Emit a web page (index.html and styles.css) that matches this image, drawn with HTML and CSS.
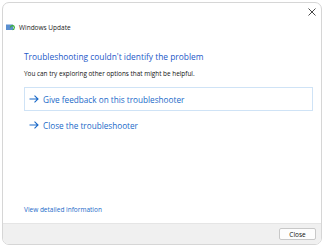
FILE: index.html
```html
<!DOCTYPE html>
<html lang="en">
<head>
    <meta charset="UTF-8">
    <title>Windows Update</title>
    <link rel="stylesheet" href="styles.css">
</head>
<body>
    <div class="window">
        <div class="titlebar">
            <svg class="close-x" width="8" height="8" viewBox="0 0 8 8">
                <path d="M0.5 0.5L7.5 7.5M7.5 0.5L0.5 7.5" stroke="#333" stroke-width="0.9"/>
            </svg>
        </div>
        <div class="app-title">
            <svg class="app-icon" width="9" height="7" viewBox="0 0 9 7">
                <rect x="0" y="0.5" width="7" height="5.5" fill="#5b8fd0"/>
                <path d="M4.5 3.6a1.9 1.9 0 1 1 3.4 1.1" stroke="#3dae3a" stroke-width="1.3" fill="none"/>
                <path d="M6.4 6.3l2.2-0.5-1.2-1.7z" fill="#3dae3a"/>
            </svg>
            <span>Windows Update</span>
        </div>
        <div class="content">
            <h1 class="heading">Troubleshooting couldn't identify the problem</h1>
            <p class="subtext">You can try exploring other options that might be helpful.</p>
            <div class="options">
                <div class="option selected">
                    <svg class="arrow" width="10" height="8" viewBox="0 0 10 8">
                        <path d="M0.5 4H9M5.5 0.6L9 4L5.5 7.4" stroke="#1b6ac9" stroke-width="1.1" fill="none"/>
                    </svg>
                    <span>Give feedback on this troubleshooter</span>
                </div>
                <div class="option">
                    <svg class="arrow" width="10" height="8" viewBox="0 0 10 8">
                        <path d="M0.5 4H9M5.5 0.6L9 4L5.5 7.4" stroke="#1b6ac9" stroke-width="1.1" fill="none"/>
                    </svg>
                    <span>Close the troubleshooter</span>
                </div>
            </div>
            <a class="details">View detailed information</a>
        </div>
        <div class="footer">
            <button class="close-btn">Close</button>
        </div>
    </div>
</body>
</html>
```

FILE: styles.css
```css
* {
    margin: 0;
    padding: 0;
    box-sizing: border-box;
}

body {
    font-family: "Open Sans", "Noto Sans", Arial, sans-serif;
    background: #fff;
    color: #1a1a1a;
}

.window {
    margin: 2px 0 0 2px;
    width: 320px;
    height: 243px;
    border: 1px solid #d6d6d6;
    border-radius: 7px;
    display: flex;
    flex-direction: column;
    overflow: hidden;
    background: #fff;
}

.titlebar {
    height: 17px;
    display: flex;
    justify-content: flex-end;
    align-items: center;
    padding: 0 5px 0 0;
}

.app-title {
    display: flex;
    align-items: center;
    gap: 4px;
    padding: 0 0 0 3px;
    height: 14px;
    font-size: 6.5px;
    color: #222;
}

.content {
    flex: 1;
    display: flex;
    flex-direction: column;
    padding: 17px 8px 0 21px;
}

.heading {
    font-size: 8.4px;
    font-weight: normal;
    color: #1d58c8;
    line-height: 12px;
}

.subtext {
    margin-top: 6px;
    font-size: 6.4px;
    line-height: 10px;
    color: #111;
}

.options {
    margin-top: 8px;
    display: flex;
    flex-direction: column;
    gap: 2px;
}

.option {
    display: flex;
    align-items: center;
    gap: 4px;
    height: 24px;
    padding: 0 4px;
    border: 1px solid transparent;
    font-size: 8.2px;
    color: #1b6ac9;
}

.option.selected {
    border-color: #cfe3f6;
}

.details {
    margin-top: auto;
    margin-bottom: 9px;
    font-size: 6.5px;
    color: #1b6ac9;
}

.footer {
    height: 21px;
    background: #f0f0f0;
    border-top: 1px solid #e5e5e5;
    display: flex;
    justify-content: flex-end;
    align-items: center;
    padding: 0 5px 0 0;
}

.close-btn {
    width: 37px;
    height: 12px;
    font-family: inherit;
    font-size: 6.5px;
    background: #fdfdfd;
    border: 1px solid #c8c8c8;
    border-radius: 2px;
    color: #111;
}
```
